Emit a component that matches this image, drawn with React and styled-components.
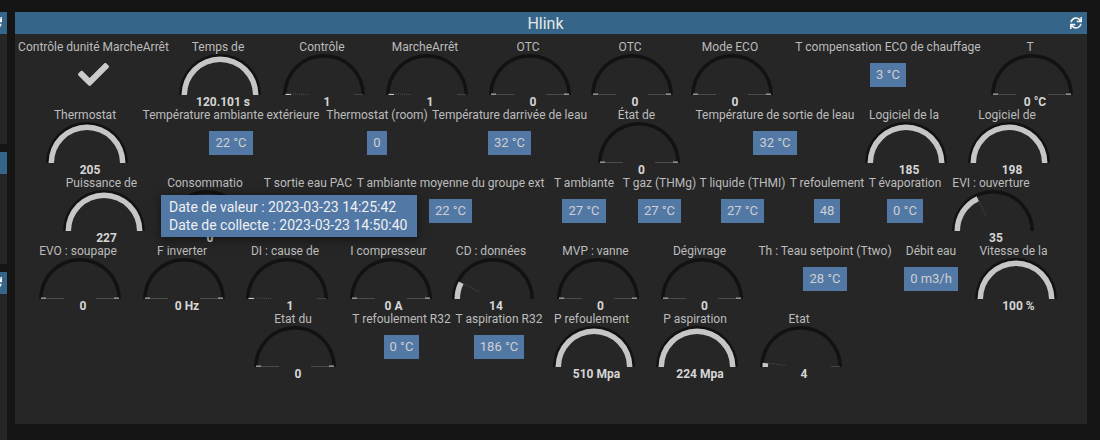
import React from "react";
import styled, { createGlobalStyle } from "styled-components";
import { FaCheck, FaSync } from "react-icons/fa";

const GlobalStyle = createGlobalStyle`
  html, body {
    margin: 0;
    background: #151515;
    font-family: Roboto, "Liberation Sans", sans-serif;
  }
`;

const Page = styled.div`
  width: 1100px;
  height: 440px;
  padding-top: 12px;
  box-sizing: border-box;
  display: flex;
  gap: 8px;
  overflow: hidden;
`;

const SideColumn = styled.div`
  width: 7px;
  display: flex;
  flex-direction: column;
  gap: 8px;
  flex-shrink: 0;
`;

const SidePanel = styled.div`
  height: ${(props) => props.$h}px;
  background: #262626;
  overflow: hidden;
`;

const Panel = styled.div`
  position: relative;
  width: 1072px;
  height: 412px;
  background: #262626;
`;

const Header = styled.div`
  height: 22px;
  background: #356689;
  display: flex;
  align-items: center;
  justify-content: flex-end;
  padding-right: 5px;
  color: #f2f2f2;
  font-size: 12px;

  svg {
    flex-shrink: 0;
    width: 12px;
    height: 12px;
  }
`;

const Title = styled.div`
  flex: 1;
  text-align: center;
  font-size: 16px;
  color: #e6e6e6;
  padding-left: 6px;
`;

const Body = styled.div`
  padding-top: 6px;
`;

const Row = styled.div`
  display: flex;
  height: 68px;
`;

const Tile = styled.div`
  width: ${(props) => props.$w}px;
  margin-left: ${(props) => props.$ml}px;
  flex-shrink: 0;
  display: flex;
  flex-direction: column;
  align-items: center;
`;

const Label = styled.div`
  height: 13px;
  line-height: 14px;
  font-size: 12px;
  color: #bcbcbc;
  white-space: nowrap;
`;

const Badge = styled.div`
  margin-top: 10px;
  height: 24px;
  line-height: 24px;
  padding: 0 6px;
  background: #5278a6;
  color: #cfcfcf;
  font-size: 13px;
  white-space: nowrap;
`;

const CheckMark = styled(FaCheck)`
  margin-top: 6px;
  width: 31px;
  height: 31px;
  color: #cbcbcb;
`;

const GaugeBox = styled.svg`
  display: block;
  flex-shrink: 0;
  margin-top: 1px;
  margin-left: 4px;
  width: 84px;
  height: 42px;
`;

const GaugeValue = styled.div`
  height: 13px;
  line-height: 13px;
  padding-left: 10px;
  font-size: 12px;
  font-weight: 700;
  color: #d6d6d6;
  white-space: nowrap;
`;

const Tooltip = styled.div`
  position: absolute;
  left: 146px;
  top: 183px;
  width: 256px;
  height: 42px;
  box-sizing: border-box;
  padding: 3px 8px;
  background: #5278a6;
  color: #f0f0f0;
  font-size: 14px;
  line-height: 18px;
  white-space: nowrap;
  box-shadow: 0 2px 10px rgba(0, 0, 0, 0.5);
`;

const CX = 42;
const CY = 41;

function polar(r, f) {
  const a = Math.PI * (1 - f);
  return [CX + r * Math.cos(a), CY - r * Math.sin(a)];
}

function arcBand(outer, inner, f) {
  const [x1, y1] = polar(outer, 0);
  const [x2, y2] = polar(outer, f);
  const [x3, y3] = polar(inner, f);
  const [x4, y4] = polar(inner, 0);
  return `M${x1} ${y1}A${outer} ${outer} 0 0 1 ${x2} ${y2}L${x3} ${y3}A${inner} ${inner} 0 0 0 ${x4} ${y4}Z`;
}

const Gauge = ({ f }) => {
  const [nx1, ny1] = polar(33, f);
  const [nx2, ny2] = polar(16, f);
  return (
    <GaugeBox viewBox="0 0 84 42">
      <path d={arcBand(41, 37.5, 1)} fill="#121212" />
      {f > 0 && <path d={arcBand(38.5, 33, f)} fill="#c6c6c6" />}
      {f > 0 && f < 1 && (
        <line x1={nx1} y1={ny1} x2={nx2} y2={ny2} stroke="#555" strokeWidth="0.8" strokeDasharray="1 1" />
      )}
      {f === 0 && (
        <>
          <rect x="3" y="39.4" width="5" height="1.6" fill="#8f8f8f" />
          <rect x="76" y="39.4" width="5" height="1.6" fill="#8f8f8f" />
          <rect x="8" y="40" width="18" height="1" fill="#4a4a4a" />
          <rect x="58" y="40" width="18" height="1" fill="#4a4a4a" />
        </>
      )}
      {f > 0 && f < 0.05 && <rect x="72" y="40" width="9" height="1" fill="#444" />}
    </GaugeBox>
  );
};

const rows = [
  [
    { c: 93.5, w: 153, label: "Contrôle dunité MarcheArrêt", check: true },
    { c: 218, w: 84, label: "Temps de", f: 1, value: "120.101 s" },
    { c: 322, w: 84, label: "Contrôle", f: 0.01, value: "1" },
    { c: 425, w: 84, label: "MarcheArrêt", f: 0.01, value: "1" },
    { c: 528, w: 84, label: "OTC", f: 0, value: "0" },
    { c: 630, w: 84, label: "OTC", f: 0, value: "0" },
    { c: 730, w: 84, label: "Mode ECO", f: 0, value: "0" },
    { c: 888, w: 187, label: "T compensation ECO de chauffage", badge: "3 °C" },
    { c: 1030, w: 84, label: "T", f: 0, value: "0 °C" },
  ],
  [
    { c: 85, w: 84, label: "Thermostat", f: 1, value: "205" },
    { c: 231, w: 175, label: "Température ambiante extérieure", badge: "22 °C" },
    { c: 377, w: 102, label: "Thermostat (room)", badge: "0" },
    { c: 509.5, w: 157, label: "Température darrivée de leau", badge: "32 °C" },
    { c: 636.5, w: 84, label: "État de", f: 0, value: "0" },
    { c: 775, w: 161, label: "Température de sortie de leau", badge: "32 °C" },
    { c: 904, w: 84, label: "Logiciel de la", f: 1, value: "185" },
    { c: 1007, w: 84, label: "Logiciel de", f: 1, value: "198" },
  ],
  [
    { c: 101.5, w: 84, label: "Puissance de", f: 1, value: "227" },
    { c: 205, w: 84, label: "Consommatio", f: 0, value: "0" },
    { c: 308, w: 89, label: "T sortie eau PAC" },
    { c: 450.5, w: 189, label: "T ambiante moyenne du groupe ext", badge: "22 °C" },
    { c: 584, w: 60, label: "T ambiante", badge: "27 °C" },
    { c: 659.5, w: 73, label: "T gaz (THMg)", badge: "27 °C" },
    { c: 742.5, w: 86, label: "T liquide (THMI)", badge: "27 °C" },
    { c: 827, w: 74, label: "T refoulement", badge: "48" },
    { c: 905, w: 74, label: "T évaporation", badge: "0 °C" },
    { c: 991, w: 84, label: "EVI : ouverture", f: 0.36, value: "35" },
  ],
  [
    { c: 78, w: 84, label: "EVO : soupape", f: 0, value: "0" },
    { c: 182, w: 84, label: "F inverter", f: 0, value: "0 Hz" },
    { c: 285, w: 84, label: "DI : cause de", f: 0.01, value: "1" },
    { c: 388.5, w: 84, label: "I compresseur", f: 0, value: "0 A" },
    { c: 491, w: 84, label: "CD : données", f: 0.15, value: "14" },
    { c: 595.5, w: 84, label: "MVP : vanne", f: 0, value: "0" },
    { c: 699.5, w: 84, label: "Dégivrage", f: 0, value: "0" },
    { c: 825, w: 134, label: "Th : Teau setpoint (Ttwo)", badge: "28 °C" },
    { c: 931, w: 50, label: "Débit eau", badge: "0 m3/h" },
    { c: 1013.5, w: 70, label: "Vitesse de la", f: 1, value: "100 %" },
  ],
  [
    { c: 293, w: 84, label: "Etat du", f: 0, value: "0" },
    { c: 401.5, w: 100, label: "T refoulement R32", badge: "0 °C" },
    { c: 499, w: 88, label: "T aspiration R32", badge: "186 °C" },
    { c: 591.5, w: 84, label: "P refoulement", f: 1, value: "510 Mpa" },
    { c: 695, w: 84, label: "P aspiration", f: 1, value: "224 Mpa" },
    { c: 799, w: 84, label: "Etat", f: 0.035, value: "4" },
  ],
];

const TileRow = ({ items }) => {
  let end = 15; // left edge of the panel
  return (
    <Row>
      {items.map((t, i) => {
        const ml = t.c - t.w / 2 - end;
        end = t.c + t.w / 2;
        return (
          <Tile key={i} $w={t.w} $ml={ml}>
            <Label>{t.label}</Label>
            {t.check && <CheckMark />}
            {t.badge && <Badge>{t.badge}</Badge>}
            {t.f !== undefined && <Gauge f={t.f} />}
            {t.value && <GaugeValue>{t.value}</GaugeValue>}
          </Tile>
        );
      })}
    </Row>
  );
};

export default function App() {
  return (
    <>
      <GlobalStyle />
      <Page>
        <SideColumn>
          <SidePanel $h={132}>
            <Header>
              <FaSync />
            </Header>
          </SidePanel>
          <SidePanel $h={112}>
            <Header />
          </SidePanel>
          <SidePanel $h={168}>
            <Header>
              <FaSync />
            </Header>
          </SidePanel>
        </SideColumn>
        <Panel>
          <Header>
            <Title>Hlink</Title>
            <FaSync />
          </Header>
          <Body>
            {rows.map((items, i) => (
              <TileRow key={i} items={items} />
            ))}
          </Body>
          <Tooltip>
            <div>Date de valeur : 2023-03-23 14:25:42</div>
            <div>Date de collecte : 2023-03-23 14:50:40</div>
          </Tooltip>
        </Panel>
      </Page>
    </>
  );
}
